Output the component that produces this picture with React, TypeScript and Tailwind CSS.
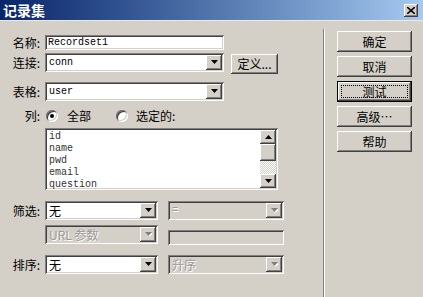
import React from 'react';

// Win2000 style bevels
const sunken =
  'shadow-[inset_1px_1px_0_#808080,inset_-1px_-1px_0_#ffffff,inset_2px_2px_0_#404040,inset_-2px_-2px_0_#d4d0c8]';
const raised =
  'shadow-[inset_-1px_-1px_0_#404040,inset_1px_1px_0_#ffffff,inset_-2px_-2px_0_#808080,inset_2px_2px_0_#d4d0c8]';

const mono = "font-['Liberation_Mono',monospace] text-[10px]";

function Arrow({ up = false, disabled = false }: { up?: boolean; disabled?: boolean }) {
  return (
    <svg width="7" height="5" viewBox="0 0 7 5">
      {disabled && <polygon points="1,1 8,1 4.5,5" fill="#ffffff" />}
      <polygon
        points={up ? '3.5,0 7,4 0,4' : '0,0 7,0 3.5,4'}
        fill={disabled ? '#808080' : '#000000'}
      />
    </svg>
  );
}

function Select({
  width,
  text,
  disabled = false,
  code = false,
}: {
  width: string;
  text: string;
  disabled?: boolean;
  code?: boolean;
}) {
  return (
    <div className={`${sunken} ${width} flex h-[19px] p-[2px] ${disabled ? 'bg-[#d4d0c8]' : 'bg-white'}`}>
      <div
        className={`flex flex-1 items-center pl-[2px] ${code ? mono : 'text-[12px]'} ${
          disabled ? 'text-[#9a9a9a] [text-shadow:1px_1px_0_#ffffff]' : 'text-black'
        }`}
      >
        {text}
      </div>
      <div className={`${raised} flex w-[16px] items-center justify-center bg-[#d4d0c8]`}>
        <Arrow disabled={disabled} />
      </div>
    </div>
  );
}

function Label({ text }: { text: string }) {
  return <div className="w-[41px] shrink-0 pr-[1px] text-right text-[12px] leading-none">{text}</div>;
}

function Radio({ checked }: { checked: boolean }) {
  return (
    <div
      className={`flex h-[12px] w-[12px] items-center justify-center rounded-full bg-white ${sunken}`}
    >
      {checked && <div className="h-[4px] w-[4px] rounded-full bg-black" />}
    </div>
  );
}

function Button({ label, isDefault = false }: { label: string; isDefault?: boolean }) {
  if (isDefault) {
    return (
      <div className="h-[21px] w-[75px] border border-black">
        <div className={`${raised} relative flex h-full items-center justify-center bg-[#d4d0c8] text-[12px]`}>
          {label}
          <div className="absolute inset-[3px] border border-dotted border-black" />
        </div>
      </div>
    );
  }
  return (
    <div className={`${raised} flex h-[21px] w-[75px] items-center justify-center bg-[#d4d0c8] text-[12px]`}>
      {label}
    </div>
  );
}

const columns = ['id', 'name', 'pwd', 'email', 'question'];

export default function App() {
  return (
    <div className="h-[297px] w-[423px] overflow-hidden bg-[#d4d0c8] font-['Noto_Sans_CJK_SC',sans-serif] text-black">
      {/* Title bar */}
      <div className="flex h-[20px] items-center justify-between bg-linear-to-r from-[#0a246a] to-[#a6caf0] pl-[3px] pr-[5px]">
        <span className="text-[14px] font-bold leading-none text-white">记录集</span>
        <div className={`${raised} flex h-[13px] w-[14px] items-center justify-center bg-[#d4d0c8]`}>
          <svg width="8" height="7" viewBox="0 0 8 7">
            <path d="M0 0 L8 7 M8 0 L0 7" stroke="#000" strokeWidth="1.6" />
          </svg>
        </div>
      </div>
      <div className="h-px bg-[#ece9e2]" />

      <div className="flex">
        {/* Left pane */}
        <div className="w-[323px] shrink-0 pt-[14px]">
          <div className="flex h-[15px] items-center gap-[4px]">
            <Label text="名称:" />
            <div className={`${sunken} flex h-[15px] w-[179px] items-center bg-white pl-[3px] ${mono}`}>
              Recordset1
            </div>
          </div>

          <div className="mt-[3px] flex items-start gap-[4px]">
            <div className="flex h-[19px] items-center">
              <Label text="连接:" />
            </div>
            <Select width="w-[179px]" text="conn" code />
            <div className={`${raised} ml-[3px] mt-px flex h-[20px] w-[47px] items-center justify-center bg-[#d4d0c8] text-[12px]`}>
              定义...
            </div>
          </div>

          <div className="mt-[8px] flex items-center gap-[4px]">
            <Label text="表格:" />
            <Select width="w-[179px]" text="user" code />
          </div>

          <div className="mt-[8px] flex h-[14px] items-center text-[12px]">
            <Label text="列:" />
            <div className="ml-[5px]">
              <Radio checked />
            </div>
            <span className="ml-[9px]">全部</span>
            <div className="ml-[25px]">
              <Radio checked={false} />
            </div>
            <span className="ml-[8px]">选定的:</span>
          </div>

          {/* Columns listbox */}
          <div className={`${sunken} ml-[45px] mt-[5px] flex h-[62px] w-[233px] bg-white p-[2px]`}>
            <div className={`flex-1 pl-[2px] pt-px leading-[12px] text-[#333333] ${mono}`}>
              {columns.map((c) => (
                <div key={c}>{c}</div>
              ))}
            </div>
            <div className="flex w-[16px] flex-col">
              <div className={`${raised} flex h-[14px] items-center justify-center bg-[#d4d0c8]`}>
                <Arrow up />
              </div>
              <div className={`${raised} h-[17px] bg-[#d4d0c8]`} />
              <div className="flex-1 bg-[repeating-conic-gradient(#ffffff_0%_25%,#d4d0c8_0%_50%)] bg-[length:2px_2px]" />
              <div className={`${raised} flex h-[14px] items-center justify-center bg-[#d4d0c8]`}>
                <Arrow />
              </div>
            </div>
          </div>

          <div className="mt-[11px] flex items-center gap-[4px]">
            <Label text="筛选:" />
            <Select width="w-[113px]" text="无" />
            <div className="ml-[6px]">
              <Select width="w-[116px]" text="=" disabled code />
            </div>
          </div>

          <div className="ml-[45px] mt-[5px] flex items-start">
            <Select width="w-[113px]" text="URL 参数" disabled />
            <div className={`${sunken} ml-[10px] mt-[5px] h-[15px] w-[116px] bg-[#d4d0c8]`} />
          </div>

          <div className="mt-[10px] flex items-center gap-[4px]">
            <Label text="排序:" />
            <Select width="w-[113px]" text="无" />
            <div className="ml-[6px]">
              <Select width="w-[116px]" text="升序" disabled />
            </div>
          </div>
        </div>

        {/* Separator */}
        <div className="mt-[8px] h-[270px] w-[2px] border-l border-r border-l-[#808080] border-r-white" />

        {/* Buttons */}
        <div className="ml-[12px] flex flex-col gap-[4px] pt-[10px]">
          <Button label="确定" />
          <Button label="取消" />
          <Button label="测试" isDefault />
          <Button label="高级…" />
          <Button label="帮助" />
        </div>
      </div>
    </div>
  );
}
